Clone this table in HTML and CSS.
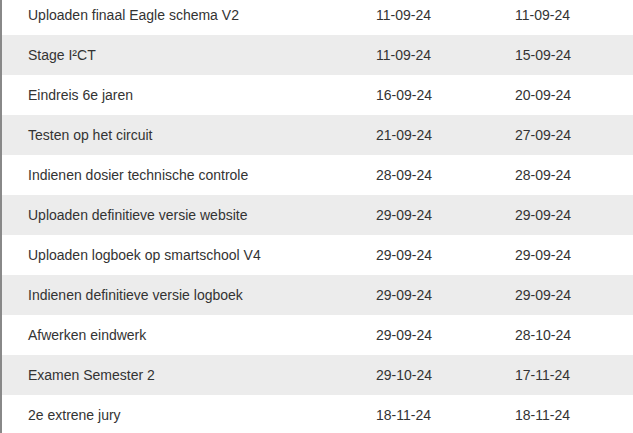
FILE: index.html
```html
<!DOCTYPE html>
<html>
<head>
<meta charset="utf-8">
<link rel="stylesheet" href="styles.css">
</head>
<body>
<div class="table">
  <div class="row"><div class="cell">Uploaden finaal Eagle schema V2</div><div class="cell">11-09-24</div><div class="cell">11-09-24</div></div>
  <div class="row alt"><div class="cell">Stage I²CT</div><div class="cell">11-09-24</div><div class="cell">15-09-24</div></div>
  <div class="row"><div class="cell">Eindreis 6e jaren</div><div class="cell">16-09-24</div><div class="cell">20-09-24</div></div>
  <div class="row alt"><div class="cell">Testen op het circuit</div><div class="cell">21-09-24</div><div class="cell">27-09-24</div></div>
  <div class="row"><div class="cell">Indienen dosier technische controle</div><div class="cell">28-09-24</div><div class="cell">28-09-24</div></div>
  <div class="row alt"><div class="cell">Uploaden definitieve versie website</div><div class="cell">29-09-24</div><div class="cell">29-09-24</div></div>
  <div class="row"><div class="cell">Uploaden logboek op smartschool V4</div><div class="cell">29-09-24</div><div class="cell">29-09-24</div></div>
  <div class="row alt"><div class="cell">Indienen definitieve versie logboek</div><div class="cell">29-09-24</div><div class="cell">29-09-24</div></div>
  <div class="row"><div class="cell">Afwerken eindwerk</div><div class="cell">29-09-24</div><div class="cell">28-10-24</div></div>
  <div class="row alt"><div class="cell">Examen Semester 2</div><div class="cell">29-10-24</div><div class="cell">17-11-24</div></div>
  <div class="row"><div class="cell">2e extrene jury</div><div class="cell">18-11-24</div><div class="cell">18-11-24</div></div>
</div>
</body>
</html>
```
FILE: styles.css
```css
html, body {
  margin: 0;
  padding: 0;
  background: #fff;
  overflow: hidden;
}
body {
  font-family: "Liberation Sans", Arial, sans-serif;
  font-size: 14px;
  color: #333;
}
.table {
  margin-top: -5px;
  border-left: 2px solid #888;
}
.row {
  display: grid;
  grid-template-columns: 348px 139px 1fr;
  height: 40px;
  align-items: center;
}
.row.alt {
  background: #ececec;
}
.cell {
  padding-left: 26px;
  white-space: nowrap;
}
```
